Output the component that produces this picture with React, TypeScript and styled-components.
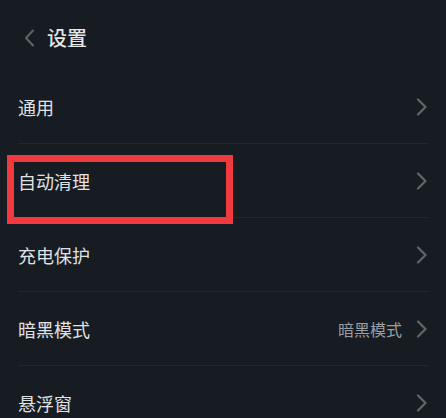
import React from "react";
import styled, { createGlobalStyle } from "styled-components";

const Global = createGlobalStyle`
  html, body { margin: 0; padding: 0; background: #161c22; }
  body { font-family: "Noto Sans CJK SC", "Noto Sans", sans-serif; }
`;

const Screen = styled.div`
  position: relative;
  width: 446px;
  height: 418px;
  overflow: hidden;
  background: #161c22;
`;

const Header = styled.div`
  height: 70px;
  display: flex;
  align-items: center;
  padding: 6px 0 0 24px;
  gap: 12px;
  box-sizing: border-box;
`;

const Title = styled.div`
  font-size: 20px;
  font-weight: 500;
  color: #e4e6e8;
  line-height: 1;
`;

const List = styled.div`
  display: flex;
  flex-direction: column;
`;

const Row = styled.div<{ $last?: boolean }>`
  height: 74px;
  margin: 0 18px;
  box-sizing: border-box;
  display: flex;
  align-items: center;
  justify-content: space-between;
  border-bottom: 1px solid ${(p) => (p.$last ? "transparent" : "#1f282b")};
`;

const Label = styled.div`
  font-size: 18px;
  font-weight: 400;
  color: #e0e2e4;
  line-height: 1;
`;

const Right = styled.div`
  display: flex;
  align-items: center;
  gap: 14px;
`;

const Value = styled.div`
  font-size: 16px;
  color: #9b9fa3;
  line-height: 1;
`;

const Highlight = styled.div`
  position: absolute;
  left: 7px;
  top: 155px;
  width: 226px;
  height: 69px;
  box-sizing: border-box;
  border: 7px solid #f03a3f;
`;

const ChevronRight = () => (
  <svg width="12" height="18" viewBox="0 0 12 18" fill="none">
    <polyline points="2,1.5 9.5,9 2,16.5" stroke="#61666b" strokeWidth="2.2" strokeLinecap="round" strokeLinejoin="round" />
  </svg>
);

const ChevronLeft = () => (
  <svg width="11" height="18" viewBox="0 0 11 18" fill="none">
    <polyline points="9,1.5 2,9 9,16.5" stroke="#5f6469" strokeWidth="2" strokeLinecap="round" strokeLinejoin="round" />
  </svg>
);

const rows: { label: string; value?: string }[] = [
  { label: "通用" },
  { label: "自动清理" },
  { label: "充电保护" },
  { label: "暗黑模式", value: "暗黑模式" },
  { label: "悬浮窗" },
];

export default function App() {
  return (
    <Screen>
      <Global />
      <Header>
        <ChevronLeft />
        <Title>设置</Title>
      </Header>
      <List>
        {rows.map((r, i) => (
          <Row key={r.label} $last={i === rows.length - 1}>
            <Label>{r.label}</Label>
            <Right>
              {r.value && <Value>{r.value}</Value>}
              <ChevronRight />
            </Right>
          </Row>
        ))}
      </List>
      <Highlight />
    </Screen>
  );
}
